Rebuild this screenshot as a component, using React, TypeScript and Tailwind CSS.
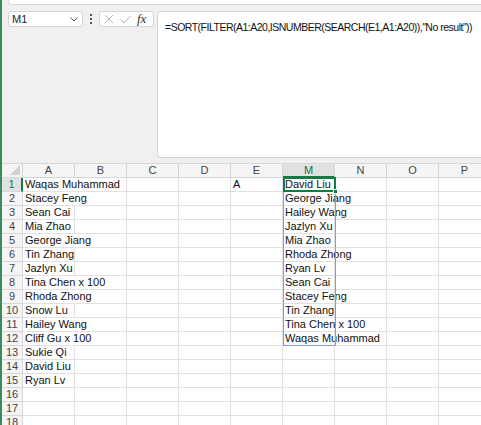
import React from "react";

const colA = [
  "Waqas Muhammad","Stacey Feng","Sean Cai","Mia Zhao","George Jiang","Tin Zhang","Jazlyn Xu",
  "Tina Chen x 100","Rhoda Zhong","Snow Lu","Hailey Wang","Cliff Gu x 100","Sukie Qi","David Liu","Ryan Lv",
];
const colM = [
  "David Liu","George Jiang","Hailey Wang","Jazlyn Xu","Mia Zhao","Rhoda Zhong","Ryan Lv","Sean Cai",
  "Stacey Feng","Tin Zhang","Tina Chen x 100","Waqas Muhammad",
];
const overflowA = new Set([0, 1, 4, 7, 8, 10, 11]);
const headers = ["A","B","C","D","E","M","N","O","P"];

export default function App() {
  const rows = Array.from({ length: 18 }, (_, i) => i);
  return (
    <div className="w-[481px] h-[425px] overflow-hidden bg-[#f0f0f0] flex font-['Liberation_Sans',Arial,sans-serif]">
      <div className="w-[2px] h-full bg-[#3d8a5c] shrink-0" />
      <div className="flex-1 flex flex-col min-w-0">
        {/* top ribbon remnant */}
        <div className="shrink-0 h-[5px] ml-[6px] bg-white border-b border-l border-[#d6d6d6] rounded-bl-[4px]" />
        {/* formula bar */}
        <div className="shrink-0 flex items-start mt-[6px] h-[147px]">
          <div className="shrink-0 ml-[6px] w-[75px] h-[16px] bg-white border border-[#d4d4d4] rounded-[3px] flex items-center justify-between pl-[3px] pr-[4px]">
            <span className="text-[11px] text-[#222] leading-none">M1</span>
            <svg width="8" height="5" viewBox="0 0 8 5"><path d="M0.5 0.5 L4 4 L7.5 0.5" fill="none" stroke="#555" strokeWidth="1" /></svg>
          </div>
          <div className="shrink-0 w-[16px] h-[16px] flex flex-col items-center justify-center gap-[2px]">
            <div className="w-[2px] h-[2px] bg-[#555]" />
            <div className="w-[2px] h-[2px] bg-[#555]" />
            <div className="w-[2px] h-[2px] bg-[#555]" />
          </div>
          <div className="shrink-0 w-[55px] h-[16px] bg-white border border-[#d4d4d4] rounded-[3px] flex items-center pl-[4px] gap-[6px]">
            <svg width="10" height="10" viewBox="0 0 10 10"><path d="M1 1 L9 9 M9 1 L1 9" stroke="#b4b4b4" strokeWidth="1" fill="none" /></svg>
            <svg width="11" height="9" viewBox="0 0 11 9"><path d="M1 4.5 L4 8 L10.5 1" stroke="#b4b4b4" strokeWidth="1" fill="none" /></svg>
            <span className="font-['Liberation_Serif',serif] italic text-[13px] leading-none text-[#333] -mt-[2px]">fx</span>
          </div>
          <div className="ml-[3px] flex-1 min-w-0 overflow-hidden h-[147px] bg-white border border-[#d4d4d4] rounded-l-[4px] border-r-0 pl-[7px] pt-[2px]">
            <span className="text-[10.5px] tracking-[-0.5px] text-[#111] whitespace-nowrap">=SORT(FILTER(A1:A20,ISNUMBER(SEARCH(E1,A1:A20)),"No result"))</span>
          </div>
        </div>
        {/* grid */}
        <div className="shrink-0 mt-[5px] relative">
          <div className="grid grid-cols-[21px_repeat(9,52px)] auto-rows-[14px] bg-white border-t border-[#d6d6d6]">
            <div className="bg-[#f5f5f5] border-r border-b border-[#d6d6d6] relative">
              <svg className="absolute right-[2px] bottom-[2px]" width="10" height="10" viewBox="0 0 10 10"><polygon points="10,0 10,10 0,10" fill="#d2d2d2" /></svg>
            </div>
            {headers.map((h) => (
              <div
                key={h}
                className={
                  h === "M"
                    ? "bg-[#e1e1e1] border-r border-b-2 border-r-[#d6d6d6] border-b-[#107c41] text-[#107c41] text-[11px] leading-[13px] text-center"
                    : "bg-[#f5f5f5] border-r border-b border-[#d6d6d6] text-[#444] text-[11px] leading-[13px] text-center"
                }
              >
                {h}
              </div>
            ))}
            {rows.map((r) => (
              <React.Fragment key={r}>
                <div
                  className={
                    r === 0
                      ? "bg-[#e1e1e1] border-r-2 border-b border-r-[#107c41] border-b-[#d6d6d6] text-[#107c41] text-[11px] leading-[13px] text-center"
                      : "bg-[#f5f5f5] border-r border-b border-[#d6d6d6] text-[#444] text-[11px] leading-[13px] text-center"
                  }
                >
                  {r + 1}
                </div>
                {headers.map((h) => {
                  let text = "";
                  if (h === "A") text = colA[r] ?? "";
                  if (h === "E" && r === 0) text = "A";
                  if (h === "M") text = colM[r] ?? "";
                  const hideRight = h === "A" && overflowA.has(r);
                  return (
                    <div
                      key={h}
                      className={
                        (hideRight ? "border-r border-r-white " : "border-r border-r-[#e1e1e1] ") +
                        "border-b border-b-[#e1e1e1] whitespace-nowrap overflow-visible text-[11px] leading-[13px] pl-[2px] text-[#111]"
                      }
                    >
                      {text}
                    </div>
                  );
                })}
              </React.Fragment>
            ))}
          </div>
          {/* spill range border */}
          <div className="absolute left-[281px] top-[14px] w-[53px] h-[169px] border border-[#7f9ed6] pointer-events-none" />
          {/* active cell */}
          <div className="absolute left-[281px] top-[14px] w-[53px] h-[15px] border-2 border-[#107c41] pointer-events-none" />
          <div className="absolute left-[331px] top-[26px] w-[5px] h-[5px] bg-[#107c41] border border-white pointer-events-none" />
        </div>
      </div>
    </div>
  );
}
